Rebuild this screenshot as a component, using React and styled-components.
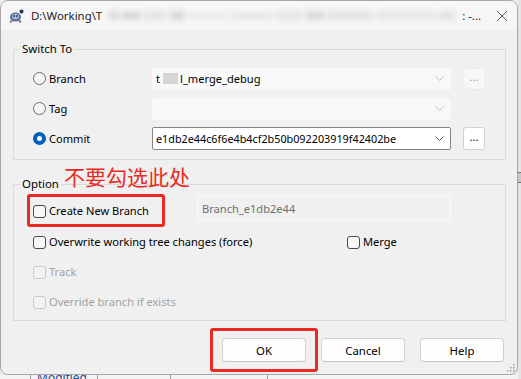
import styled, { createGlobalStyle } from "styled-components";

const GlobalStyle = createGlobalStyle`
  html, body {
    margin: 0;
    padding: 0;
  }
  body {
    background: #ececec;
    font-family: "Segoe UI", "Noto Sans", sans-serif;
    font-size: 11.1px;
    color: #000;
  }
`;

const Screen = styled.div`
  display: grid;
  grid-template-columns: 518px 3px;
  grid-template-rows: 375px 4px;
  width: 521px;
  height: 379px;
  overflow: hidden;
  background: #ececec;
`;

const Dialog = styled.div`
  position: relative;
  display: flex;
  flex-direction: column;
  box-sizing: border-box;
  border: 1px solid #a8a8a8;
  border-radius: 8px;
  background: #f0f0f0;
  overflow: hidden;
`;

const TitleBar = styled.div`
  display: flex;
  align-items: center;
  height: 29px;
  padding: 0 9px 0 8px;
  background: #f6f6f6;
  gap: 7px;
  & > svg {
    flex: none;
  }
`;

const TitleText = styled.span`
  flex: none;
  font-size: 11.4px;
  color: #1c1c1c;
  white-space: nowrap;
`;

const SmudgeRow = styled.div`
  display: flex;
  align-items: center;
  flex: 1;
  min-width: 0;
  overflow: hidden;
  gap: 3px;
  padding: 4px 0;
  filter: blur(2.4px);
`;

const Smudge = styled.span`
  display: block;
  flex: none;
  width: ${(p) => p.$w}px;
  height: ${(p) => p.$h || 9}px;
  background: ${(p) => p.$tone || "#dcdcdc"};
`;

const CloseButton = styled.span`
  display: flex;
  flex: none;
  margin-left: 8px;
  width: 12px;
  height: 12px;
`;

const Content = styled.div`
  display: flex;
  flex-direction: column;
  padding: 11px 11px 0 12px;
`;

const Group = styled.fieldset`
  margin: ${(p) => p.$margin || "0"};
  padding: ${(p) => p.$pad};
  border: 1px solid #dadada;
  min-width: 0;
  display: flex;
  flex-direction: column;
  gap: ${(p) => p.$gap || 0}px;
`;

const Legend = styled.legend`
  position: relative;
  margin-left: -13px;
  padding: 0 2px;
  font-size: 11.4px;
  line-height: 16px;
  color: #000;
`;

const Annotation = styled.span`
  position: absolute;
  left: calc(100% + 3px);
  top: -12px;
  font-family: "Noto Sans CJK SC", sans-serif;
  font-size: 21px;
  line-height: 24px;
  color: #ea2a22;
  white-space: nowrap;
`;

const SwitchRow = styled.div`
  display: grid;
  grid-template-columns: 107px 299px 22px;
  column-gap: 12px;
  align-items: center;
  height: 23px;
`;

const ChoiceLabel = styled.label`
  display: flex;
  align-items: center;
  gap: 3px;
  font-size: 11.1px;
  line-height: 16px;
  white-space: nowrap;
  color: ${(p) => (p.$disabled ? "#a2a2a2" : "#000")};
`;

const Radio = styled.span`
  box-sizing: border-box;
  width: 13px;
  height: 13px;
  border-radius: 50%;
  flex: none;
  border: ${(p) => (p.$checked ? "4px solid #005fb8" : "1px solid #6a6a6a")};
  background: ${(p) => (p.$checked ? "#ffffff" : "#f6f6f6")};
`;

const Check = styled.span`
  box-sizing: border-box;
  width: 13px;
  height: 13px;
  flex: none;
  border-radius: 3px;
  border: 1px solid ${(p) => (p.$disabled ? "#c9c9c9" : "#4a4a4a")};
  background: ${(p) => (p.$disabled ? "#f3f3f3" : "#f7f7f7")};
`;

const Combo = styled.div`
  box-sizing: border-box;
  display: flex;
  align-items: center;
  justify-content: space-between;
  height: ${(p) => (p.$active ? 23 : 22)}px;
  padding: 0 6px 0 3px;
  border: 1px solid ${(p) => (p.$active ? "#858585" : "#f8f8f8")};
  border-radius: 2px;
  background: ${(p) => (p.$active ? "#ffffff" : "#f8f8f8")};
  font-size: ${(p) => (p.$active ? 10.8 : 11.1)}px;
  color: #000;
  white-space: nowrap;
  overflow: hidden;
`;

const ComboText = styled.span`
  display: flex;
  align-items: center;
`;

const Redacted = styled.span`
  display: inline-block;
  width: 15px;
  height: 11px;
  margin: 0 2px 0 3px;
  background: #d5d5d5;
  filter: blur(0.6px);
`;

const DotsButton = styled.button`
  box-sizing: border-box;
  width: 22px;
  height: ${(p) => (p.$active ? 23 : 22)}px;
  padding: 0 0 4px;
  border: 1px solid ${(p) => (p.$active ? "#cfcfcf" : "#ececec")};
  border-radius: 3px;
  background: ${(p) => (p.$active ? "#ffffff" : "#f7f7f7")};
  color: ${(p) => (p.$active ? "#000" : "#9a9a9a")};
  font-family: inherit;
  font-size: 11px;
  line-height: 1;
`;

const OptionRow = styled.div`
  display: flex;
  align-items: center;
  height: ${(p) => p.$h || 30}px;
`;

const Cell = styled.div`
  width: ${(p) => p.$w}px;
  flex: none;
  display: flex;
`;

const Highlight = styled.div`
  position: relative;
  display: flex;
  &::after {
    content: "";
    position: absolute;
    inset: ${(p) => p.$inset};
    border: 3px solid #ea2a22;
    border-radius: 3px;
    pointer-events: none;
  }
`;

const TextBox = styled.div`
  box-sizing: border-box;
  width: 254px;
  height: 24px;
  align-self: flex-start;
  margin-top: 1px;
  padding: 0 4px;
  display: flex;
  align-items: center;
  border: 1px solid #fafafa;
  background: #f0f0f0;
  color: #6f6f6f;
  font-size: 11.1px;
`;

const ButtonBar = styled.div`
  display: flex;
  justify-content: flex-end;
  gap: 15px;
  margin-top: 17px;
  padding-right: 2px;
`;

const DialogButton = styled.button`
  box-sizing: border-box;
  width: 84px;
  height: 24px;
  border: 1px solid #d2d2d2;
  border-bottom-color: #c4c4c4;
  border-radius: 4px;
  background: #fdfdfd;
  font-family: inherit;
  font-size: 11.4px;
  color: #000;
`;

const Grip = styled.svg`
  position: absolute;
  right: 2px;
  bottom: 2px;
`;

const RightPeek = styled.div`
  grid-column: 2;
  grid-row: 1 / span 2;
  display: flex;
  flex-direction: column;
  background: #e4e4e4;
`;

const PeekThumb = styled.div`
  margin-top: 172px;
  height: 9px;
  border-top: 1px solid #6e6e6e;
  border-bottom: 1px solid #6e6e6e;
  background: #c9c9c9;
`;

const BottomPeek = styled.div`
  grid-column: 1;
  grid-row: 2;
  display: flex;
  background: #f3f3f3;
  overflow: hidden;
`;

const PeekCell = styled.div`
  width: ${(p) => p.$w}px;
  flex: none;
  border-right: 1px solid #9c9c9c;
  padding-left: ${(p) => p.$pl || 0}px;
  font-size: 12px;
  line-height: 12px;
  margin-top: -3px;
  color: #2a4790;
  white-space: nowrap;
  overflow: hidden;
`;

const Chevron = ({ color }) => (
  <svg width="9" height="5" viewBox="0 0 9 5">
    <polyline points="0.5,0.5 4.5,4.5 8.5,0.5" fill="none" stroke={color} strokeWidth="1" />
  </svg>
);

const AppIcon = () => (
  <svg width="15" height="14" viewBox="0 0 15 14">
    <ellipse cx="6.5" cy="8" rx="5.5" ry="4.5" fill="#5b6f8e" />
    <ellipse cx="6.5" cy="7.5" rx="3.6" ry="2.8" fill="#a9bad3" />
    <circle cx="5" cy="7" r="1" fill="#2d3c57" />
    <circle cx="8" cy="7" r="1" fill="#2d3c57" />
    <circle cx="12.5" cy="2.5" r="2" fill="#25345a" />
    <circle cx="2" cy="12.5" r="1.3" fill="#6f7f99" />
    <circle cx="11" cy="12.5" r="1.3" fill="#6f7f99" />
  </svg>
);

const CloseIcon = () => (
  <svg width="12" height="12" viewBox="0 0 12 12">
    <path d="M1 1 L11 11 M11 1 L1 11" stroke="#5a5a5a" strokeWidth="1" fill="none" />
  </svg>
);

const titleSmudges = [
  { w: 10, tone: "#dbdbdb" },
  { w: 18, tone: "#d3d3d3", h: 7 },
  { w: 24, tone: "#e5e5e5" },
  { w: 14, tone: "#d9d9d9" },
  { w: 40, tone: "#e7e7e7", h: 5 },
  { w: 44, tone: "#e0e0e0", h: 4 },
  { w: 26, tone: "#e6e6e6" },
  { w: 18, tone: "#dadada" },
  { w: 46, tone: "#e4e4e4" },
  { w: 60, tone: "#e7e7e7" },
  { w: 40, tone: "#e2e2e2" },
];

const App = () => {
  return (
    <>
      <GlobalStyle />
      <Screen>
        <Dialog>
          <TitleBar>
            <AppIcon />
            <TitleText>D:\Working\T</TitleText>
            <SmudgeRow>
              {titleSmudges.map((s, i) => (
                <Smudge key={i} $w={s.w} $h={s.h} $tone={s.tone} />
              ))}
            </SmudgeRow>
            <TitleText>: -...</TitleText>
            <CloseButton>
              <CloseIcon />
            </CloseButton>
          </TitleBar>

          <Content>
            <Group $pad="10px 20px 9px 19px" $gap={7}>
              <Legend>Switch To</Legend>
              <SwitchRow>
                <ChoiceLabel>
                  <Radio />
                  Branch
                </ChoiceLabel>
                <Combo>
                  <ComboText>
                    t<Redacted />l_merge_debug
                  </ComboText>
                  <Chevron color="#c4c4c4" />
                </Combo>
                <DotsButton>...</DotsButton>
              </SwitchRow>
              <SwitchRow>
                <ChoiceLabel>
                  <Radio />
                  Tag
                </ChoiceLabel>
                <Combo>
                  <ComboText />
                  <Chevron color="#c4c4c4" />
                </Combo>
                <span />
              </SwitchRow>
              <SwitchRow>
                <ChoiceLabel>
                  <Radio $checked />
                  Commit
                </ChoiceLabel>
                <Combo $active>
                  <ComboText>e1db2e44c6f6e4b4cf2b50b092203919f42402be</ComboText>
                  <Chevron color="#555555" />
                </Combo>
                <DotsButton $active>...</DotsButton>
              </SwitchRow>
            </Group>

            <Group $margin="16px 0 0" $pad="3px 20px 3px 19px">
              <Legend>
                Option
                <Annotation>不要勾选此处</Annotation>
              </Legend>
              <OptionRow $h={32}>
                <Cell $w={164}>
                  <Highlight $inset="-9px -16px -8px -6px">
                    <ChoiceLabel>
                      <Check />
                      Create New Branch
                    </ChoiceLabel>
                  </Highlight>
                </Cell>
                <TextBox>Branch_e1db2e44</TextBox>
              </OptionRow>
              <OptionRow>
                <Cell $w={314}>
                  <ChoiceLabel>
                    <Check />
                    Overwrite working tree changes (force)
                  </ChoiceLabel>
                </Cell>
                <ChoiceLabel>
                  <Check />
                  Merge
                </ChoiceLabel>
              </OptionRow>
              <OptionRow>
                <ChoiceLabel $disabled>
                  <Check $disabled />
                  Track
                </ChoiceLabel>
              </OptionRow>
              <OptionRow>
                <ChoiceLabel $disabled>
                  <Check $disabled />
                  Override branch if exists
                </ChoiceLabel>
              </OptionRow>
            </Group>

            <ButtonBar>
              <Highlight $inset="-10px -12px">
                <DialogButton>OK</DialogButton>
              </Highlight>
              <DialogButton>Cancel</DialogButton>
              <DialogButton>Help</DialogButton>
            </ButtonBar>
          </Content>

          <Grip width="8" height="8" viewBox="0 0 8 8">
            {[
              [6, 0],
              [6, 3],
              [3, 3],
              [6, 6],
              [3, 6],
              [0, 6],
            ].map(([x, y], i) => (
              <rect key={i} x={x} y={y} width="1.5" height="1.5" fill="#9a9a9a" />
            ))}
          </Grip>
        </Dialog>

        <RightPeek>
          <PeekThumb />
        </RightPeek>

        <BottomPeek>
          <PeekCell $w={30} />
          <PeekCell $w={60} $pl={6}>
            Modified
          </PeekCell>
          <PeekCell $w={72} />
          <PeekCell $w={96} />
        </BottomPeek>
      </Screen>
    </>
  );
};

export default App;
